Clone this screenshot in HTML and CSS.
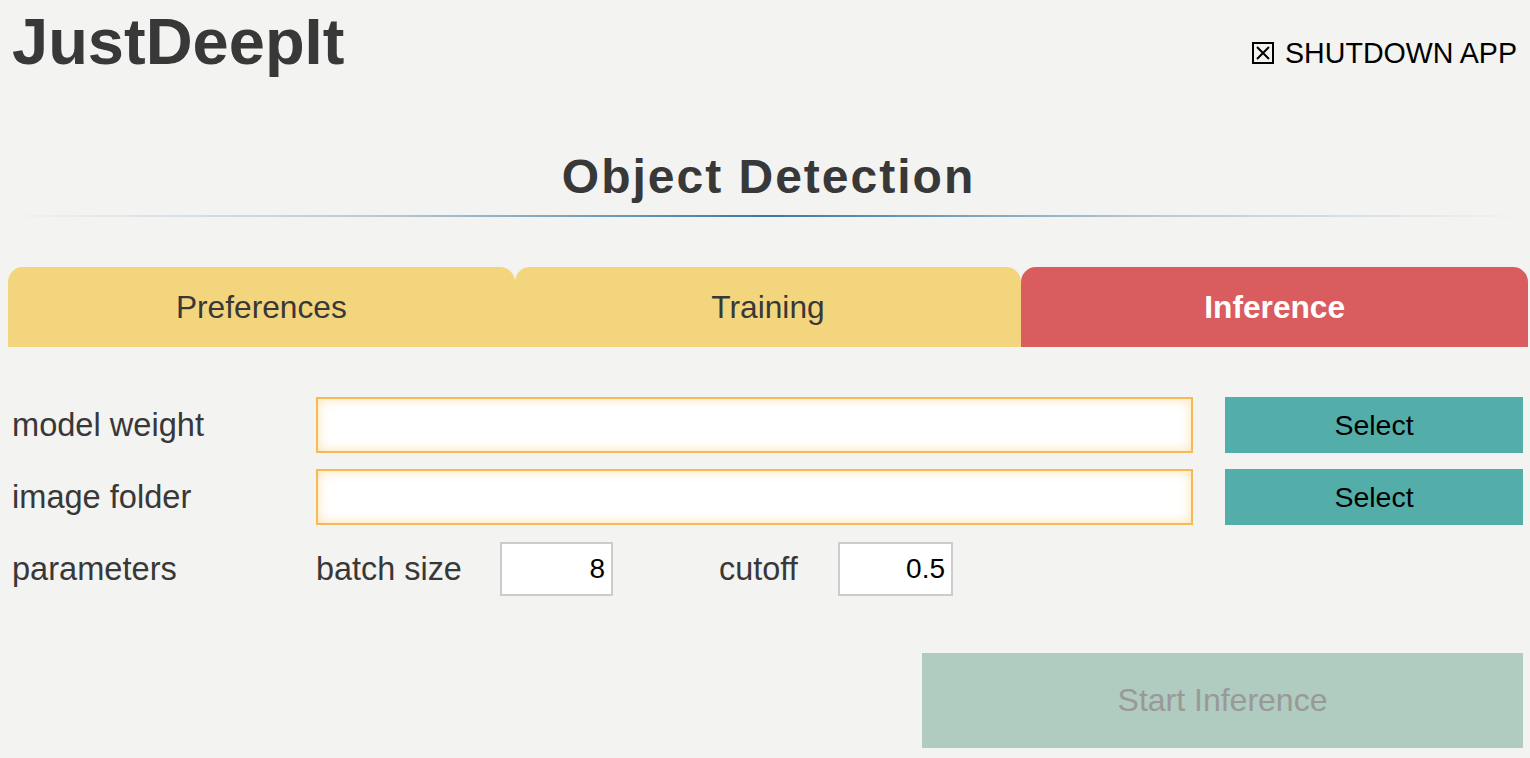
FILE: index.html
```html
<!DOCTYPE html>
<html lang="en">
<head>
<meta charset="utf-8">
<title>JustDeepIt</title>
<link rel="stylesheet" href="styles.css">
</head>
<body>
<div class="page">
  <header class="header">
    <h1 class="brand">JustDeepIt</h1>
    <a class="shutdown" href="#">
      <svg class="shutdown-icon" width="22" height="22" viewBox="0 0 22 22" aria-hidden="true">
        <rect x="1" y="1" width="20" height="20" fill="none" stroke="#000" stroke-width="2"/>
        <path d="M5 5 L17 17 M17 5 L5 17" stroke="#000" stroke-width="2"/>
      </svg>
      <span>SHUTDOWN APP</span>
    </a>
  </header>

  <h2 class="module-title">Object Detection</h2>
  <div class="divider"></div>

  <nav class="tabs">
    <div class="tab">Preferences</div>
    <div class="tab">Training</div>
    <div class="tab tab-active">Inference</div>
  </nav>

  <form class="form">
    <div class="form-row">
      <label class="form-label">model weight</label>
      <input class="path-input" type="text">
      <button type="button" class="select-btn">Select</button>
    </div>
    <div class="form-row">
      <label class="form-label">image folder</label>
      <input class="path-input" type="text">
      <button type="button" class="select-btn">Select</button>
    </div>
    <div class="form-row params-row">
      <label class="form-label">parameters</label>
      <div class="params">
        <span class="param-label param-batch">batch size</span>
        <input class="num-input" type="text" value="8">
        <span class="param-label param-cutoff">cutoff</span>
        <input class="num-input num-cutoff" type="text" value="0.5">
      </div>
    </div>
    <div class="actions">
      <button type="button" class="start-btn" disabled>Start Inference</button>
    </div>
  </form>
</div>
</body>
</html>
```

FILE: styles.css
```css
html, body {
  margin: 0;
  padding: 0;
  background: #f3f3f1;
}

body {
  font-family: "Liberation Sans", Arial, Helvetica, sans-serif;
  color: #383838;
}

.page {
  padding: 0 7px 0 12px;
  width: 1530px;
  box-sizing: border-box;
  overflow: hidden;
  height: 758px;
}

.header {
  display: flex;
  justify-content: space-between;
  align-items: flex-start;
  padding-top: 10px;
}

.brand {
  margin: 0;
  font-size: 65px;
  line-height: 64px;
  font-weight: bold;
  color: #383838;
}

.shutdown {
  display: flex;
  align-items: center;
  margin-top: 29px;
  margin-right: 6px;
  color: #000;
  text-decoration: none;
  font-size: 28.6px;
  line-height: 28px;
}

.shutdown-icon {
  display: block;
  margin-right: 11px;
}

.module-title {
  margin: 79px 0 0 2px;
  text-align: center;
  font-size: 48px;
  line-height: 48px;
  letter-spacing: 2px;
  font-weight: bold;
  color: #383838;
}

.divider {
  margin: 14px 0 0 -2px;
  height: 2px;
  background: linear-gradient(90deg, rgba(62, 122, 165, 0) 0%, rgba(62, 122, 165, 0.35) 25%, #3d78a2 50%, rgba(62, 122, 165, 0.35) 75%, rgba(62, 122, 165, 0) 100%);
}

.tabs {
  display: flex;
  margin: 50px -5px 0 -4px;
  height: 80px;
}

.tab {
  flex: 1;
  display: flex;
  align-items: center;
  justify-content: center;
  background: #f3d57d;
  border-radius: 15px 15px 0 0;
  font-size: 31.7px;
  color: #383838;
}

.tab-active {
  background: #d95c5f;
  color: #fff;
  font-weight: bold;
}

.form {
  margin-top: 50px;
  display: flex;
  flex-direction: column;
}

.form-row {
  display: grid;
  grid-template-columns: 272px 1fr 298px;
  column-gap: 32px;
  align-items: center;
  height: 56px;
  margin-bottom: 16px;
}

.form-row.params-row {
  grid-template-columns: 272px 1fr;
  margin-top: 1px;
  height: 54px;
  margin-bottom: 0;
}

.form-label {
  font-size: 32.6px;
  color: #383838;
}

.path-input {
  box-sizing: border-box;
  height: 56px;
  width: 100%;
  border: 2px solid #f7b955;
  background: #fff;
  box-shadow: inset 0 0 12px rgba(248, 190, 80, 0.45);
  outline: none;
  font-size: 28px;
  padding: 0 8px;
  margin: 0;
}

.select-btn {
  height: 56px;
  width: 298px;
  border: none;
  background: #53aeaa;
  color: #000;
  font-family: "Liberation Sans", Arial, sans-serif;
  font-size: 28.5px;
  padding: 0;
  margin: 0;
}

.params {
  display: flex;
  align-items: center;
}

.param-label {
  font-size: 32.4px;
  color: #383838;
}

.param-batch {
  width: 184px;
}

.param-cutoff {
  margin-left: 106px;
  width: 119px;
}

.num-input {
  box-sizing: border-box;
  width: 113px;
  height: 54px;
  border: 2px solid #cccccc;
  background: #fff;
  text-align: right;
  font-family: "Liberation Sans", Arial, sans-serif;
  font-size: 28px;
  color: #000;
  padding: 0 6px;
  margin: 0;
  outline: none;
}

.num-cutoff {
  width: 115px;
}

.actions {
  display: flex;
  justify-content: flex-end;
  margin-top: 57px;
}

.start-btn {
  width: 601px;
  height: 95px;
  border: none;
  background: #b0cbbf;
  color: #999999;
  font-family: "Liberation Sans", Arial, sans-serif;
  font-size: 32px;
  padding: 0;
  margin: 0;
}
```
